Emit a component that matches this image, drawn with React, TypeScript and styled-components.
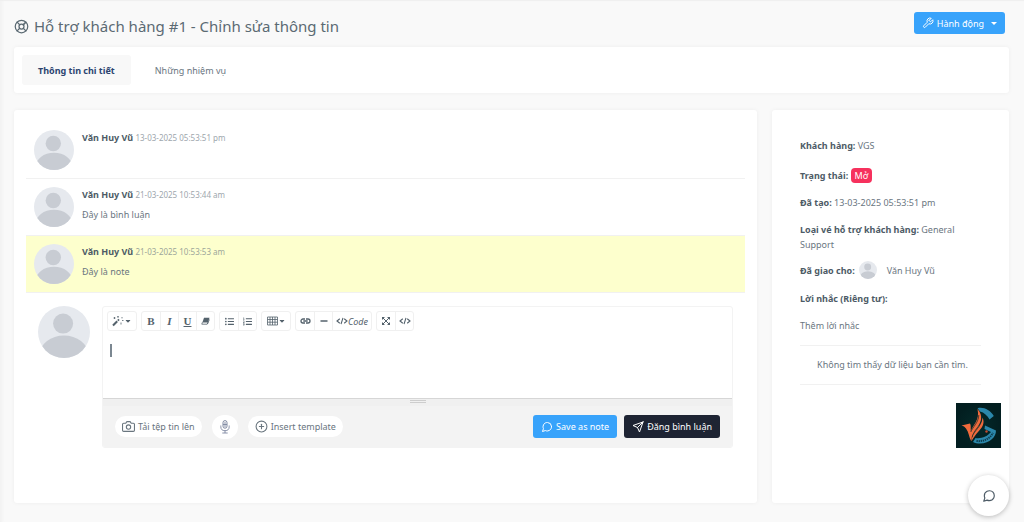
import React from 'react';
import styled, { createGlobalStyle, css } from 'styled-components';
import { FiLifeBuoy, FiTool, FiMessageCircle, FiSend, FiCamera, FiPlusCircle } from 'react-icons/fi';
import { FaListUl, FaListOl, FaCaretDown } from 'react-icons/fa';

const GlobalStyle = createGlobalStyle`
  * { box-sizing: border-box; }
  body {
    margin: 0;
    background: #f9f9f9;
    color: #6a767f;
    font-family: "Noto Sans", "Open Sans", sans-serif;
    font-size: 9px;
    line-height: 15px;
  }
  button, input, textarea { font: inherit; color: inherit; }
  svg { display: block; flex: none; }
`;

const Page = styled.div`
  min-height: 100vh;
  padding: 0 15px 18px 14px;
  box-shadow: inset 0 2px 1px -1px #efefef, inset 4px 0 3px -2px #f1f1f1;
`;

const Header = styled.header`
  display: flex;
  align-items: center;
  justify-content: space-between;
  height: 47px;
  padding: 5px 4px 0 0;
`;

const Title = styled.h1`
  display: flex;
  align-items: center;
  gap: 5px;
  margin: 0;
  font-size: 15px;
  line-height: 24px;
  font-weight: 400;
  color: #5b6a73;
`;

const SolidButton = styled.button<{ $tone: 'blue' | 'dark' }>`
  display: flex;
  align-items: center;
  gap: 3px;
  height: 23px;
  padding: 0 8px;
  border: 0;
  border-radius: 3px;
  color: #fff;
  background: ${p => (p.$tone === 'blue' ? '#38a3fb' : '#1e2433')};
  cursor: pointer;
`;

const ActionButton = styled(SolidButton)`
  align-self: flex-start;
  margin-top: 7px;
  height: 22px;
`;

const ArrowDown = styled.span`
  margin-left: 4px;
  border: 3px solid transparent;
  border-top-color: currentColor;
  border-bottom: 0;
`;

const cardStyle = css`
  background: #fff;
  border-radius: 3px;
  box-shadow: 0 0 4px rgba(0, 0, 0, 0.05);
`;

const Tabs = styled.nav`
  ${cardStyle}
  display: flex;
  gap: 8px;
  padding: 8px;
`;

const Tab = styled.a<{ $active?: boolean }>`
  padding: 8px 16px 7px;
  border-radius: 3px;
  text-decoration: none;
  color: ${p => (p.$active ? '#2b4470' : '#6a767f')};
  font-weight: ${p => (p.$active ? 700 : 400)};
  background: ${p => (p.$active ? '#f8f8f8' : 'transparent')};
`;

const Columns = styled.div`
  display: grid;
  grid-template-columns: minmax(0, 743fr) minmax(0, 237fr);
  gap: 15px;
  margin-top: 17px;
`;

const Main = styled.main`
  ${cardStyle}
  padding: 12px 12px 55px;
`;

const Comment = styled.article<{ $note?: boolean }>`
  display: flex;
  gap: 8px;
  min-height: 57px;
  padding: 8px;
  border-bottom: 1px solid #f1f1f1;
  background: ${p => (p.$note ? '#fdffcd' : 'transparent')};
`;

const CommentBody = styled.div`
  p { margin: 5px 0 0; }
`;

const Author = styled.strong`
  color: #4d5b66;
`;

const Time = styled.time`
  font-size: 8px;
  color: #6a767f;
  opacity: 0.65;
`;

const Reply = styled.form`
  display: flex;
  align-items: flex-start;
  gap: 12px;
  padding: 13px 12px 0;
`;

const Editor = styled.div`
  flex: 1;
  min-width: 0;
  border: 1px solid #f3f3f3;
  border-radius: 3px;
  overflow: hidden;
`;

const Toolbar = styled.div`
  display: flex;
  gap: 4px;
  padding: 4px;
`;

const ToolGroup = styled.div`
  display: flex;
  border: 1px solid #f0f0f0;
  border-radius: 3px;
`;

const Tool = styled.button<{ $size?: 'menu' | 'text' }>`
  display: flex;
  align-items: center;
  justify-content: center;
  width: ${p => (p.$size === 'menu' ? 28 : p.$size === 'text' ? 39 : 18)}px;
  height: 18px;
  padding: 0;
  border: 0;
  background: none;
  color: #54626c;
  cursor: pointer;

  & + & {
    border-left: 1px solid #f0f0f0;
  }
`;

const LetterTool = styled(Tool)`
  font-family: "Liberation Serif", serif;
  font-size: 11px;
  font-weight: 700;
`;

const Writing = styled.div`
  position: relative;

  &::before {
    content: '';
    position: absolute;
    left: 7px;
    top: 9px;
    width: 2px;
    height: 13px;
    background: #7b8791;
  }
  &:focus-within::before { display: none; }
`;

const TextArea = styled.textarea`
  display: block;
  width: 100%;
  height: 63px;
  padding: 8px 7px;
  border: 0;
  outline: 0;
  resize: none;
  background: transparent;
`;

const ResizeBar = styled.div`
  display: flex;
  flex-direction: column;
  align-items: center;
  gap: 1px;
  height: 8px;
  padding-top: 1px;
  border-top: 1px solid #d6d6d6;
  background: #f0f0f0;

  span {
    width: 16px;
    border-top: 1px solid #cdcdcd;
  }
`;

const EditorFooter = styled.div`
  display: flex;
  align-items: center;
  gap: 10px;
  height: 41px;
  padding: 0 12px;
  background: #f3f3f3;
`;

const PillButton = styled.button`
  display: flex;
  align-items: center;
  gap: 3px;
  height: 21px;
  padding: 0 7px;
  border: 0;
  border-radius: 12px;
  background: #fff;
  cursor: pointer;
`;

const MicButton = styled(PillButton)`
  height: 24px;
  width: 26px;
  justify-content: center;
  color: #7d87a0;
`;

const SubmitActions = styled.div`
  display: flex;
  gap: 7px;
  margin-left: auto;
`;

const Sidebar = styled.aside`
  ${cardStyle}
  padding: 28px;
`;

const Field = styled.p`
  margin: 0 0 12px;
  b { color: #4d5b66; }
`;

const StatusField = styled(Field)`
  margin-top: 15px;
`;

const Badge = styled.span`
  display: inline-block;
  padding: 0 4px;
  border-radius: 4px;
  background: #f6315d;
  color: #fff;
`;

const AssigneeField = styled(Field)`
  display: flex;
  align-items: center;
  gap: 4px;
  margin-top: -3px;

  a {
    margin-left: 6px;
    color: inherit;
    text-decoration: none;
  }
`;

const ReminderLink = styled.a`
  display: block;
  color: inherit;
  text-decoration: none;
`;

const Empty = styled.div`
  margin-top: 12px;
  padding: 11px 0 12px 4px;
  border: solid #f1f1f1;
  border-width: 1px 0;
  text-align: center;
`;

const FloatingLogo = styled.div`
  position: fixed;
  right: 23px;
  bottom: 74px;
`;

const ChatButton = styled.button`
  position: fixed;
  right: 15px;
  bottom: 6px;
  display: flex;
  align-items: center;
  justify-content: center;
  width: 41px;
  height: 41px;
  border: 0;
  border-radius: 50%;
  background: #fff;
  color: #4d5b66;
  box-shadow: 0 1px 5px rgba(0, 0, 0, 0.25);
  cursor: pointer;
`;

const Avatar = ({ size }: { size: number }) => {
  const id = React.useId();
  return (
    <svg width={size} height={size} viewBox="0 0 40 40" aria-hidden="true">
      <clipPath id={id}><circle cx="20" cy="20" r="20" /></clipPath>
      <g clipPath={`url(#${id})`}>
        <rect width="40" height="40" fill="#e6e9ee" />
        <circle cx="19.3" cy="13.5" r="7.7" fill="#c8ccd3" />
        <ellipse cx="20" cy="37" rx="18.5" ry="14.3" fill="#c8ccd3" />
      </g>
    </svg>
  );
};

const MagicIcon = () => (
  <svg width="12" height="12" viewBox="0 0 12 12" fill="none" stroke="currentColor">
    <path d="M1 10.5 5.2 6.3" strokeWidth="2" />
    <path d="M5.8 5.6 7 4.4" strokeWidth="1.8" />
    <path d="M2.5 2v2M1.5 3h2M6 1v1.6M10 2v1.4M10 5.5h1.5M9 7.5v2M5.2 1.8h1.6" strokeWidth=".8" />
  </svg>
);

const EraserIcon = () => (
  <svg width="9" height="8" viewBox="0 0 9 8">
    <path d="M3 .8h5.500L7 5.500H1.400z" fill="currentColor" />
    <path d="M1.400 5.300.8 7.200h5.400L7 5.300M6.500 7 8.400 2.500" fill="none" stroke="currentColor" strokeWidth=".8" />
  </svg>
);

const GridIcon = () => (
  <svg width="11" height="10" viewBox="0 0 11 10" fill="none" stroke="currentColor" strokeWidth=".8">
    <path d="M.5 1h10v8H.5zM.5 3.5h10M.5 6.2h10M3 1v8M5.5 1v8M8 1v8" />
  </svg>
);

const LinkIcon = () => (
  <svg width="11" height="8" viewBox="0 0 11 8" fill="none" stroke="currentColor" strokeWidth="1.3">
    <path d="M5 2H3a2 2 0 0 0 0 4h2M6 2h2a2 2 0 0 1 0 4H6M3.3 4h4.4" />
  </svg>
);

const RuleIcon = () => (
  <svg width="8" height="8" viewBox="0 0 8 8"><path d="M.5 3.3h7v1.4h-7z" fill="currentColor" /></svg>
);

const CodeIcon = () => (
  <svg width="12" height="8" viewBox="0 0 12 8" fill="none" stroke="currentColor" strokeWidth="1.1">
    <path d="M3.8 1.8 1 4l2.800 2.200M8.200 1.800 11 4 8.200 6.200M7 .8 5 7.200" />
  </svg>
);

const ExpandIcon = () => (
  <svg width="8" height="8" viewBox="0 0 8 8" fill="currentColor">
    <path d="M0 0h3L0 3zM8 0v3L5 0zM0 8V5l3 3zM8 8H5l3-3z" />
    <path d="m1 1 6 6M7 1 1 7" stroke="currentColor" strokeWidth="1" />
  </svg>
);

const MicIcon = () => (
  <svg width="10" height="14" viewBox="0 0 10 14" fill="none" stroke="currentColor">
    <rect x="3" y=".6" width="4" height="7.6" rx="2" />
    <path d="M.8 5.5v1.2a4.2 4 0 0 0 8.4 0V5.5M5 10.7V13M2.3 13h5.4M5 2v5M3 4.5h4" strokeWidth=".9" />
  </svg>
);

const LogoMark = () => (
  <svg width="45" height="45" viewBox="0 0 45 45" role="img" aria-label="VGS Software">
    <defs>
      <radialGradient id="logoBg"><stop stopColor="#042a2a" /><stop offset="1" stopColor="#021e20" /></radialGradient>
    </defs>
    <rect width="45" height="45" fill="url(#logoBg)" />
    <path d="M21.5 5.200C28 3.800 34 7 37.800 13L33.500 16.500C31.500 12.500 28 9.500 24 8.500z" fill="#2b87ab" />
    <path d="M29 22.500 40 27.500C40 34 34 40.300 24 40.500 21.500 40.500 19 40 17 39L19.500 35C25 36 31.500 33.500 35 29L28.500 26z" fill="#2b87ab" />
    <path d="M20.500 38c6.500.8 13-1.800 16.500-8" fill="none" stroke="#0b3a4b" strokeWidth="2" strokeDasharray="1.300 .8" />
    <path d="M5.500 22.500 14 20.500C15.200 22.500 14.600 25 14.800 28 17 21.500 24 17.500 21.500 6 27.500 12.500 25.500 19.500 20.300 25.500 17.300 29 16 33 15.200 38 12.800 34 13 29.500 10 25.500 8.800 23.800 7.500 23 5.500 22.500z" fill="#f06a3c" />
    <path d="M26.500 14.500C29.500 20.500 25.500 25.500 22 29 19.500 31.500 17.800 34.500 15.400 38.200 16 33 17.500 29.500 20.800 25.500 23.800 22 26.200 19 26.500 14.500z" fill="#f06a3c" />
    <path d="M16 34.500C17.200 28 26 24 25.800 14.500M14.800 29C16.500 24 22.500 20 22.800 12" fill="none" stroke="#06282a" strokeWidth=".7" />
    <circle cx="30.500" cy="28.500" r="1.200" fill="#c34c32" />
  </svg>
);

const comments = [
  { time: '13-03-2025 05:53:51 pm', text: '', note: false },
  { time: '21-03-2025 10:53:44 am', text: 'Đây là bình luận', note: false },
  { time: '21-03-2025 10:53:53 am', text: 'Đây là note', note: true },
];

export default function App() {
  return (
    <>
      <GlobalStyle />
      <Page>
        <Header>
          <Title><FiLifeBuoy size={15} />Hỗ trợ khách hàng #1 - Chỉnh sửa thông tin</Title>
          <ActionButton type="button" $tone="blue"><FiTool size={12} />Hành động<ArrowDown /></ActionButton>
        </Header>
        <Tabs>
          <Tab href="#details" $active aria-current="page">Thông tin chi tiết</Tab>
          <Tab href="#tasks">Những nhiệm vụ</Tab>
        </Tabs>
        <Columns>
          <Main>
            {comments.map(c => (
              <Comment key={c.time} $note={c.note}>
                <Avatar size={40} />
                <CommentBody>
                  <Author>Văn Huy Vũ</Author> <Time>{c.time}</Time>
                  {c.text && <p>{c.text}</p>}
                </CommentBody>
              </Comment>
            ))}
            <Reply onSubmit={e => e.preventDefault()}>
              <Avatar size={52} />
              <Editor>
                <Toolbar role="toolbar" aria-label="Formatting">
                  <ToolGroup>
                    <Tool type="button" $size="menu" aria-label="Style"><MagicIcon /><FaCaretDown size={8} /></Tool>
                  </ToolGroup>
                  <ToolGroup>
                    <LetterTool type="button" aria-label="Bold">B</LetterTool>
                    <LetterTool type="button" aria-label="Italic"><i>I</i></LetterTool>
                    <LetterTool type="button" aria-label="Underline"><u>U</u></LetterTool>
                    <Tool type="button" aria-label="Clear formatting"><EraserIcon /></Tool>
                  </ToolGroup>
                  <ToolGroup>
                    <Tool type="button" aria-label="Bulleted list"><FaListUl size={9} /></Tool>
                    <Tool type="button" aria-label="Numbered list"><FaListOl size={9} /></Tool>
                  </ToolGroup>
                  <ToolGroup>
                    <Tool type="button" $size="menu" aria-label="Table"><GridIcon /><FaCaretDown size={8} /></Tool>
                  </ToolGroup>
                  <ToolGroup>
                    <Tool type="button" aria-label="Link"><LinkIcon /></Tool>
                    <Tool type="button" aria-label="Horizontal rule"><RuleIcon /></Tool>
                    <Tool type="button" $size="text"><CodeIcon /><em>Code</em></Tool>
                  </ToolGroup>
                  <ToolGroup>
                    <Tool type="button" aria-label="Full screen"><ExpandIcon /></Tool>
                    <Tool type="button" aria-label="Code view"><CodeIcon /></Tool>
                  </ToolGroup>
                </Toolbar>
                <Writing><TextArea aria-label="Bình luận" /></Writing>
                <ResizeBar><span /><span /></ResizeBar>
                <EditorFooter>
                  <PillButton type="button"><FiCamera size={13} />Tải tệp tin lên</PillButton>
                  <MicButton type="button" aria-label="Ghi âm"><MicIcon /></MicButton>
                  <PillButton type="button"><FiPlusCircle size={13} />Insert template</PillButton>
                  <SubmitActions>
                    <SolidButton type="button" $tone="blue"><FiMessageCircle size={12} />Save as note</SolidButton>
                    <SolidButton type="submit" $tone="dark"><FiSend size={12} />Đăng bình luận</SolidButton>
                  </SubmitActions>
                </EditorFooter>
              </Editor>
            </Reply>
          </Main>
          <Sidebar>
            <Field><b>Khách hàng:</b> VGS</Field>
            <StatusField><b>Trạng thái:</b> <Badge>Mở</Badge></StatusField>
            <Field><b>Đã tạo:</b> 13-03-2025 05:53:51 pm</Field>
            <Field><b>Loại vé hỗ trợ khách hàng:</b> General Support</Field>
            <AssigneeField as="div"><b>Đã giao cho:</b><Avatar size={18} /><a href="#staff">Văn Huy Vũ</a></AssigneeField>
            <Field><b>Lời nhắc (Riêng tư):</b></Field>
            <ReminderLink href="#reminder">Thêm lời nhắc</ReminderLink>
            <Empty>Không tìm thấy dữ liệu bạn cần tìm.</Empty>
          </Sidebar>
        </Columns>
      </Page>
      <FloatingLogo><LogoMark /></FloatingLogo>
      <ChatButton type="button" aria-label="Chat"><FiMessageCircle size={14} /></ChatButton>
    </>
  );
}
